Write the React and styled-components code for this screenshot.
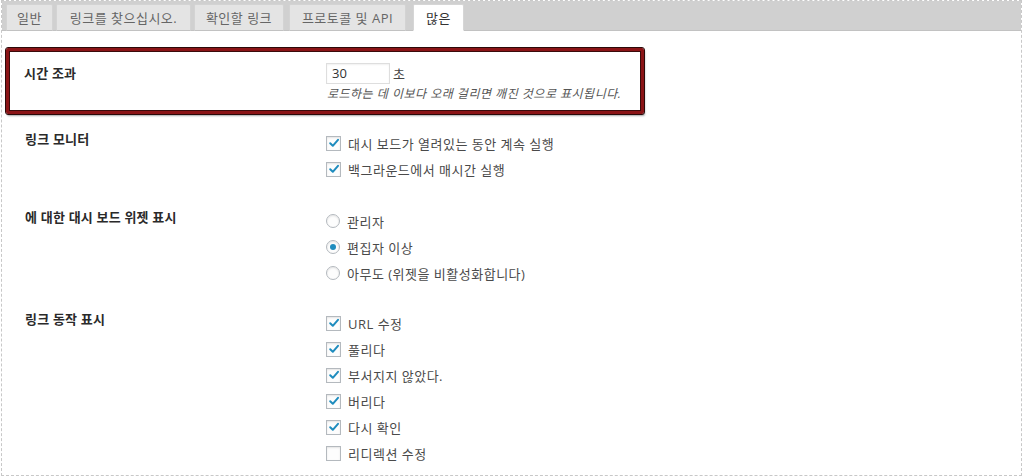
import React from "react";
import styled, { createGlobalStyle } from "styled-components";

const Global = createGlobalStyle`
  html, body { margin: 0; padding: 0; background: #fff; }
  body { font-family: "Open Sans", "Noto Sans CJK KR", sans-serif; }
`;

const Page = styled.div`
  box-sizing: border-box;
  width: 1021px;
  height: 476px;
  margin-left: 1px;
  border: 1px dashed #c8c8c8;
  overflow: hidden;
  background: #fff;
`;

const TabBar = styled.div`
  display: flex;
  align-items: flex-end;
  height: 29px;
  padding: 0 0 0 3px;
  background: #d0d0d0;
  border-bottom: 1px solid #c2c2c2;
`;

const Tab = styled.div`
  box-sizing: border-box;
  width: ${(p) => p.$w}px;
  margin-left: ${(p) => p.$gap}px;
  height: 27px;
  margin-bottom: -1px;
  display: flex;
  align-items: center;
  justify-content: center;
  font-size: 13px;
  letter-spacing: 0.5px;
  color: ${(p) => (p.$active ? "#333" : "#666")};
  background: ${(p) => (p.$active ? "#fff" : "#e4e4e4")};
  border: 1px solid ${(p) => (p.$active ? "#d6d6d6" : "#d3d3d3")};
  border-bottom: ${(p) => (p.$active ? "1px solid #fff" : "1px solid #c2c2c2")};
  border-radius: 2px 2px 0 0;
  white-space: nowrap;
`;

const Content = styled.div`
  padding: 17px 0 0 0;
`;

const Highlight = styled.div`
  box-sizing: border-box;
  width: 638px;
  margin-left: 4px;
  border: 3px solid #8b1416;
  border-radius: 2px;
  outline: 1px solid #2b0a0a;
  box-shadow: inset 0 0 0 1px #3a0b0b, 1px 2px 2px rgba(0, 0, 0, 0.35);
  padding: 12px 0 9px 15px;
  display: grid;
  grid-template-columns: 303px 1fr;
`;

const Row = styled.div`
  display: grid;
  grid-template-columns: 303px 1fr;
  padding: ${(p) => p.$pad};
  padding-left: 23px;
`;

const Label = styled.div`
  font-size: 13px;
  line-height: 18px;
  font-weight: 700;
  color: #2a2a2a;
  letter-spacing: 0.2px;
  padding-top: ${(p) => p.$top || 0}px;
`;

const Field = styled.div`
  display: flex;
  flex-direction: column;
  padding-top: ${(p) => p.$top || 0}px;
`;

const InputLine = styled.div`
  display: flex;
  align-items: center;
  gap: 3px;
  font-size: 13px;
  color: #444;
`;

const NumInput = styled.div`
  box-sizing: border-box;
  width: 64px;
  height: 21px;
  border: 1px solid #dedede;
  box-shadow: inset 0 1px 2px rgba(0, 0, 0, 0.06);
  font-size: 13px;
  line-height: 19px;
  padding-left: 5px;
  color: #333;
  margin-left: -1px;
`;

const Desc = styled.div`
  margin-top: 2px;
  font-size: 12px;
  line-height: 16px;
  font-style: italic;
  color: #555;
  letter-spacing: 0.5px;
`;

const Option = styled.div`
  display: flex;
  align-items: center;
  gap: 7px;
  height: 26px;
  font-size: 13px;
  color: #4a4a4a;
  letter-spacing: 0.5px;
`;

const Box = styled.span`
  box-sizing: border-box;
  width: 15px;
  height: 15px;
  border: 1px solid #b4b9be;
  background: #fdfdfd;
  box-shadow: inset 0 1px 2px rgba(0, 0, 0, 0.1);
  display: inline-flex;
  align-items: center;
  justify-content: center;
  margin-left: -2px;
  flex: none;
`;

const RadioCircle = styled(Box)`
  border-radius: 50%;
  width: 14px;
  height: 14px;
`;

const Dot = styled.span`
  width: 6px;
  height: 6px;
  border-radius: 50%;
  background: #1e8cbe;
`;

const Check = () => (
  <svg width="12" height="12" viewBox="0 0 12 12">
    <path d="M2.2 6.2 L4.8 8.8 L10 2.8" fill="none" stroke="#1e8cbe" strokeWidth="2" strokeLinecap="round" strokeLinejoin="round" />
  </svg>
);

const CheckOpt = ({ checked, children }) => (
  <Option>
    <Box>{checked && <Check />}</Box>
    {children}
  </Option>
);

const RadioOpt = ({ checked, children }) => (
  <Option>
    <RadioCircle>{checked && <Dot />}</RadioCircle>
    {children}
  </Option>
);

const tabs = [
  { t: "일반", w: 47, gap: 1 },
  { t: "링크를 찾으십시오.", w: 135, gap: 3 },
  { t: "확인할 링크", w: 90, gap: 3 },
  { t: "프로토콜 및 API", w: 117, gap: 5 },
  { t: "많은", w: 51, gap: 7, active: true },
];

export default function App() {
  return (
    <>
      <Global />
      <Page>
        <TabBar>
          {tabs.map((x) => (
            <Tab key={x.t} $w={x.w} $gap={x.gap} $active={x.active}>
              {x.t}
            </Tab>
          ))}
        </TabBar>
        <Content>
          <Highlight>
            <Label $top={1}>시간 조과</Label>
            <Field>
              <InputLine>
                <NumInput>30</NumInput>
                <span>초</span>
              </InputLine>
              <Desc>로드하는 데 이보다 오래 걸리면 깨진 것으로 표시됩니다.</Desc>
            </Field>
          </Highlight>
          <Row $pad="16px 0 0">
            <Label $top={0}>링크 모니터</Label>
            <Field>
              <CheckOpt checked>대시 보드가 열려있는 동안 계속 실행</CheckOpt>
              <CheckOpt checked>백그라운드에서 매시간 실행</CheckOpt>
            </Field>
          </Row>
          <Row $pad="26px 0 0">
            <Label $top={0}>에 대한 대시 보드 위젯 표시</Label>
            <Field>
              <RadioOpt>관리자</RadioOpt>
              <RadioOpt checked>편집자 이상</RadioOpt>
              <RadioOpt>아무도 (위젯을 비활성화합니다)</RadioOpt>
            </Field>
          </Row>
          <Row $pad="24px 0 0">
            <Label $top={0}>링크 동작 표시</Label>
            <Field>
              <CheckOpt checked>URL 수정</CheckOpt>
              <CheckOpt checked>풀리다</CheckOpt>
              <CheckOpt checked>부서지지 않았다.</CheckOpt>
              <CheckOpt checked>버리다</CheckOpt>
              <CheckOpt checked>다시 확인</CheckOpt>
              <CheckOpt>리디렉션 수정</CheckOpt>
            </Field>
          </Row>
        </Content>
      </Page>
    </>
  );
}
